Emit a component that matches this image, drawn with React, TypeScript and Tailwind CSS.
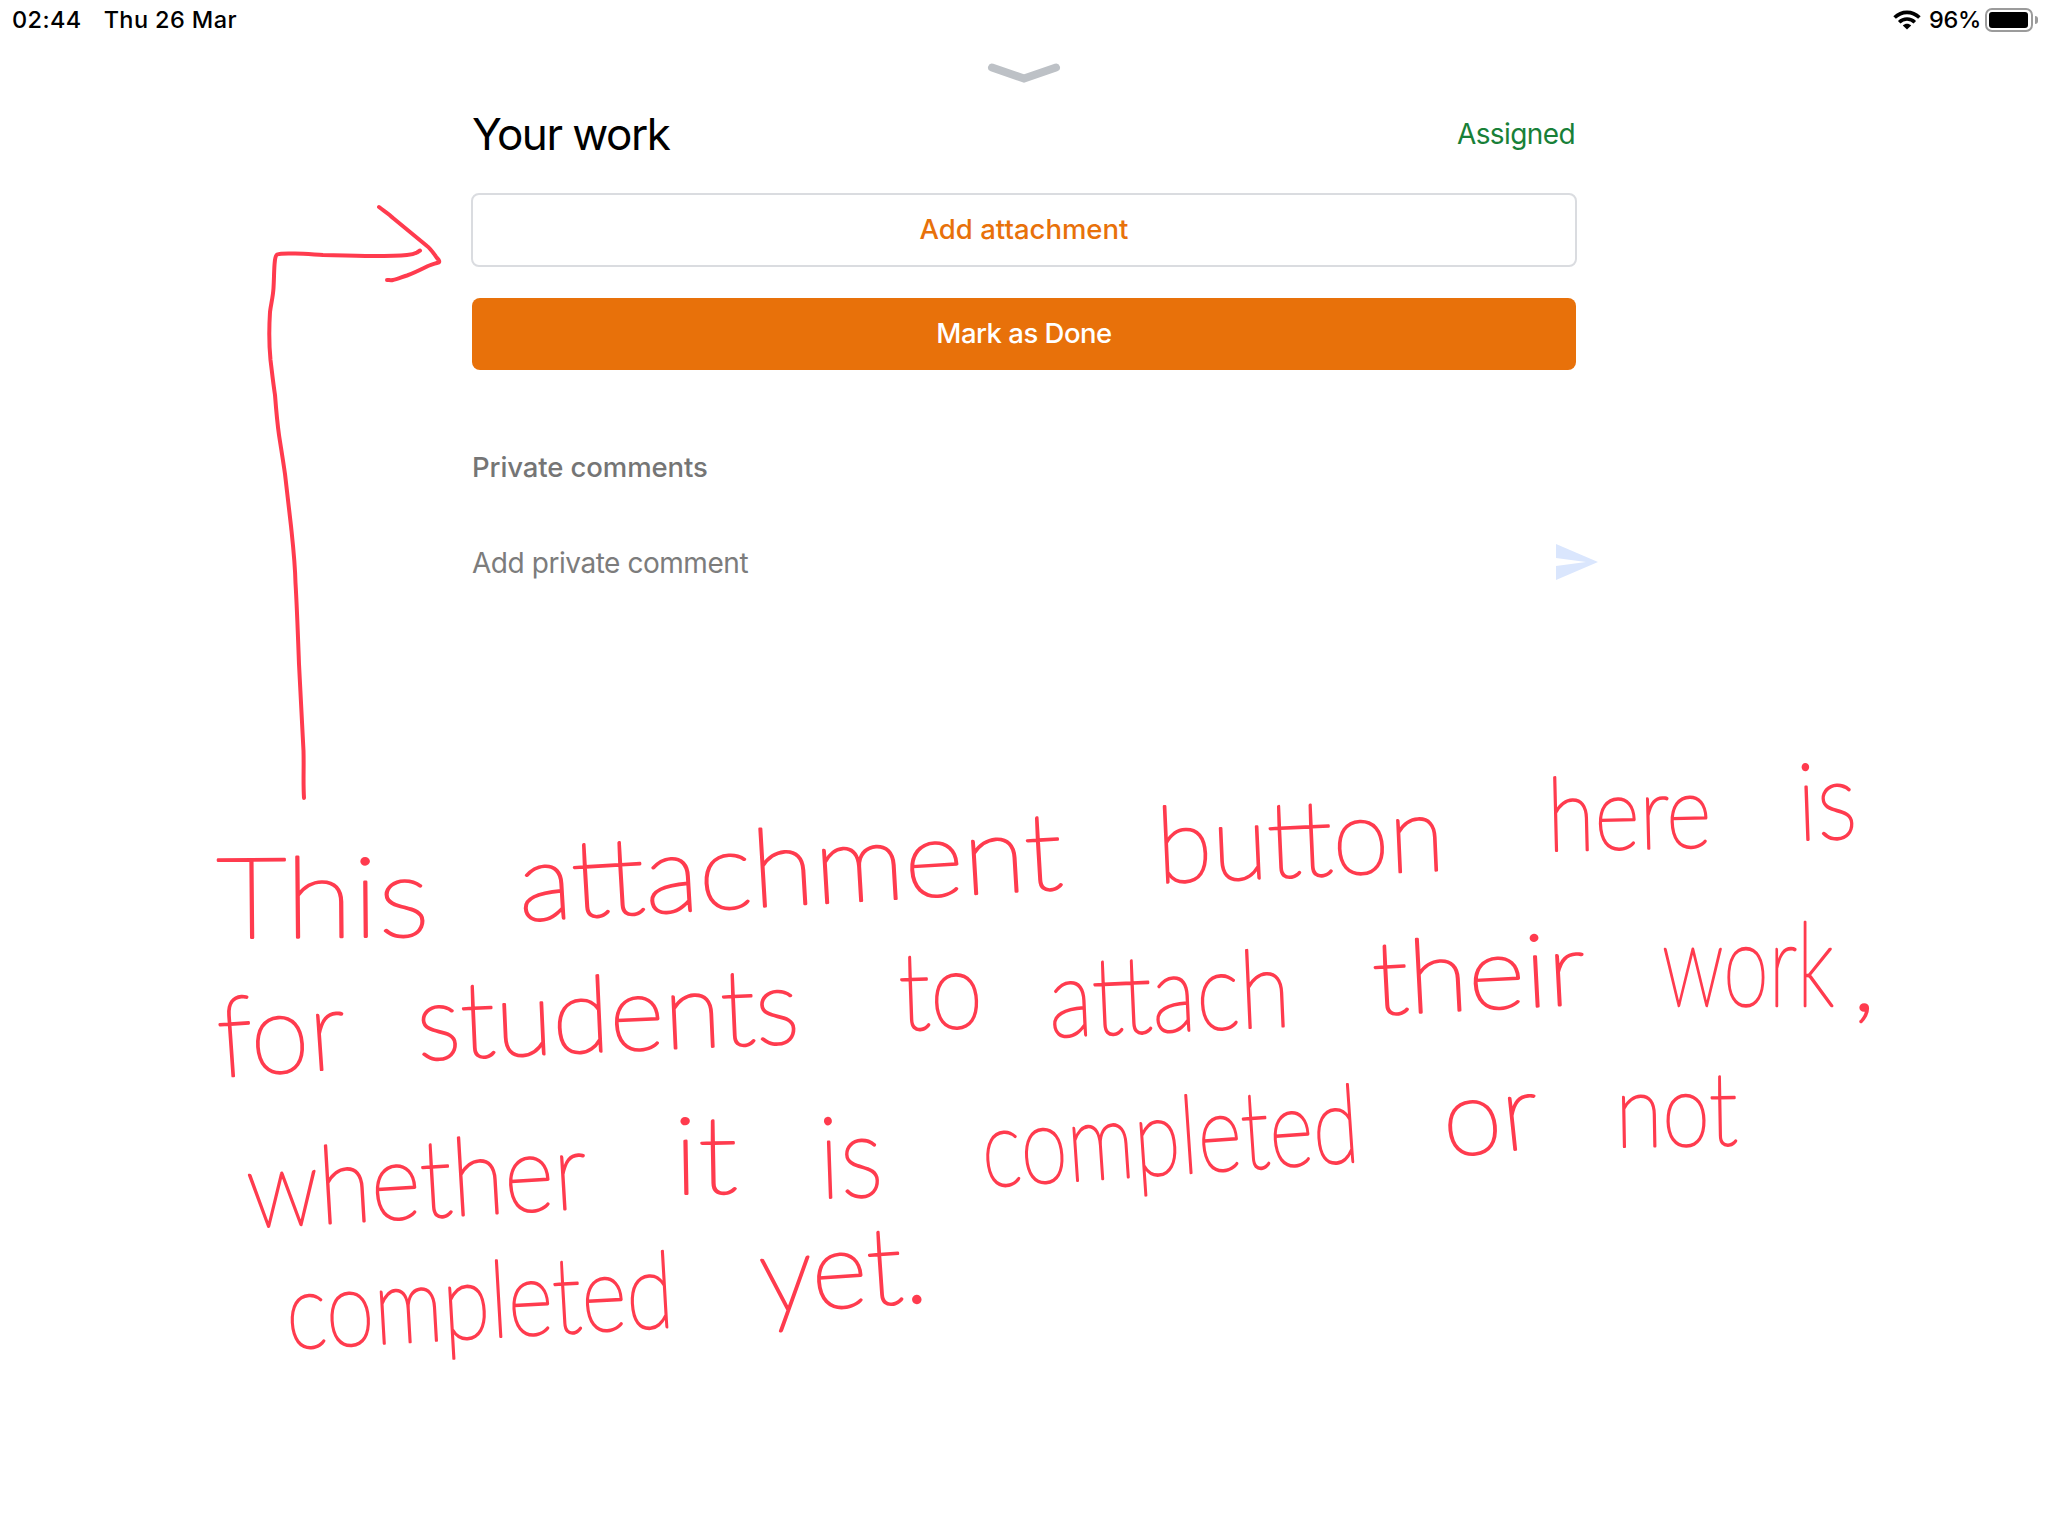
type Word = { text: string; x: number; y: number; w: number; angle: number; size: number };

const NOTE: Word[] = [
  { text: "This", x: 217, y: 938, w: 213, angle: -0.5, size: 112 },
  { text: "attachment", x: 520, y: 921, w: 545, angle: -3.4, size: 108 },
  { text: "button", x: 1158, y: 883, w: 288, angle: -2.6, size: 106 },
  { text: "here", x: 1548, y: 851, w: 164, angle: -1.4, size: 102 },
  { text: "is", x: 1798, y: 840, w: 60, angle: -2, size: 108 },
  { text: "for", x: 220, y: 1077, w: 128, angle: -4, size: 112 },
  { text: "students", x: 418, y: 1060, w: 383, angle: -2.6, size: 106 },
  { text: "to", x: 900, y: 1030, w: 84, angle: -2, size: 108 },
  { text: "attach", x: 1050, y: 1037, w: 242, angle: -2.6, size: 108 },
  { text: "their", x: 1374, y: 1015, w: 213, angle: -3, size: 102 },
  { text: "work", x: 1662, y: 1006, w: 172, angle: 0, size: 116 },
  { text: ",", x: 1852, y: 1010, w: 24, angle: 0, size: 100 },
  { text: "whether", x: 249, y: 1228, w: 340, angle: -3.4, size: 108 },
  { text: "it", x: 674, y: 1194, w: 64, angle: -1, size: 108 },
  { text: "is", x: 820, y: 1198, w: 64, angle: -2, size: 114 },
  { text: "completed", x: 984, y: 1187, w: 378, angle: -3.9, size: 108 },
  { text: "or", x: 1446, y: 1157, w: 96, angle: -6, size: 106 },
  { text: "not", x: 1616, y: 1147, w: 122, angle: -1, size: 102 },
  { text: "completed", x: 288, y: 1349, w: 388, angle: -3.3, size: 106 },
  { text: "yet.", x: 762, y: 1313, w: 168, angle: -4, size: 108 },
];

function Annotation() {
  return (
    <svg
      className="pointer-events-none absolute inset-0 h-[1536px] w-[2048px]"
      viewBox="0 0 2048 1536"
      fill="none"
      stroke="#ff3b4e"
      strokeLinecap="round"
      strokeLinejoin="round"
    >
      <path
        strokeWidth="4"
        d="M304 798C303 782 304 768 303.500 751C302 720 300.500 692 299 664C298 637 297 608 295.500 583C295 562 293 545 291 526C289 508 287 491 285 474C283 460 281 448 279 435C277 421 276 408 275 395C273 382 272 372 270.500 360C269 345 269 328 270 312C271 304 273 297 273.500 288C274 280 274 272 274.500 265C275 259 275 256 277 254.500C281 253 288 253.500 295 253.500C305 253.500 314 254.500 323 255C342 255.500 356 256 373 256C386 256 397 256 407 255C412 254.500 415 253.500 417 252.500L420 250.500"
      />
      <path
        strokeWidth="4"
        d="M379 207C384 211 389 214 393 218C404 227 416 237 427 246C431 249 434 254 437 258C439 260 440 262 438.500 262.500C436 263 432 264.500 428 266C420 270 414 273 407 275.500C402 277 397 279.500 393 280C391 280.500 389 280 387 280"
      />
      <g fill="#ff3b4e" strokeWidth="2.500" fontFamily="Lato, sans-serif" fontWeight="100">
        {NOTE.map((n, i) => (
          <text
            key={i}
            fontSize={n.size}
            textLength={n.w}
            lengthAdjust="spacingAndGlyphs"
            transform={`translate(${n.x} ${n.y}) rotate(${n.angle})`}
          >
            {n.text}
          </text>
        ))}
      </g>
    </svg>
  );
}

function StatusBar() {
  return (
    <header className="flex h-[40px] items-center justify-between pr-[10px] pl-3 text-[23.5px] leading-[40px] font-[450] text-black">
      <div className="flex gap-[22px]">
        <span className="tracking-[0.4px]">02:44</span>
        <span className="tracking-[0.4px]">Thu 26 Mar</span>
      </div>
      <div className="flex items-center">
        <svg className="mr-2 h-[20px] w-[28px]" viewBox="0 0 28 20" fill="none" stroke="#000" strokeWidth="3.600">
          <path d="M1.600 7.600C8.600 .6 19.400 .6 26.400 7.600" />
          <path d="M6.200 12.200C10.600 7.900 17.400 7.900 21.800 12.200" />
          <path d="M14 19.600L9.800 15.400C12.200 13.200 15.800 13.200 18.200 15.400Z" fill="#000" stroke="none" />
        </svg>
        <span className="mr-[4px] tracking-[-0.3px]">96%</span>
        <div className="flex items-center gap-[2px]">
          <div className="h-[24px] w-[48px] rounded-[7px] border-2 border-[#9b9b9b] p-[2px]">
            <div className="h-full w-[39px] rounded-[3px] bg-black" />
          </div>
          <div className="h-[8px] w-[3px] rounded-r-full bg-[#9b9b9b]" />
        </div>
      </div>
    </header>
  );
}

export default function App() {
  return (
    <div className="relative h-[1536px] w-[2048px] overflow-hidden bg-white font-['Inter',sans-serif]">
      <StatusBar />
      <div className="flex h-[66px] justify-center pt-[20px]">
        <svg className="h-[26px] w-[76px]" viewBox="0 0 76 26" fill="none" stroke="#bdc1c6" strokeWidth="8" strokeLinecap="round">
          <path d="M6 7.500L38 18.500L70 7.500" />
        </svg>
      </div>
      <main className="mx-auto flex w-[1106px] flex-col">
        <div className="flex h-[56px] items-center justify-between pr-[2px] pl-px">
          <h1 className="text-[44px] leading-[56px] tracking-[-1.5px] text-black">Your work</h1>
          <span className="text-[28px] leading-[56px] tracking-[-0.6px] text-[#188038]">Assigned</span>
        </div>
        <button className="mt-[31px] h-[74px] rounded-lg border-2 border-[#dadce0] text-[27.500px] font-medium text-[#e8710a]">
          Add attachment
        </button>
        <button className="mx-px mt-[31px] h-[72px] rounded-lg bg-[#e8710a] text-[27.500px] font-medium tracking-[-0.5px] text-white">
          Mark as Done
        </button>
        <h2 className="mt-[77px] h-[40px] pl-px text-[27.500px] leading-[40px] font-medium tracking-[-0.1px] text-[#757575]">
          Private comments
        </h2>
        <div className="mt-[56px] flex h-[40px] items-center justify-between pl-px">
          <span className="text-[28px] leading-[40px] tracking-[-0.45px] text-[#7c7c7c]">Add private comment</span>
          <svg className="-mt-[2px] -mr-[21px] h-[36px] w-[42px]" viewBox="0 0 42 36" fill="#dae6fd">
            <path d="M0 0L42 18L0 36V22L30 18L0 14Z" />
          </svg>
        </div>
      </main>
      <Annotation />
    </div>
  );
}
